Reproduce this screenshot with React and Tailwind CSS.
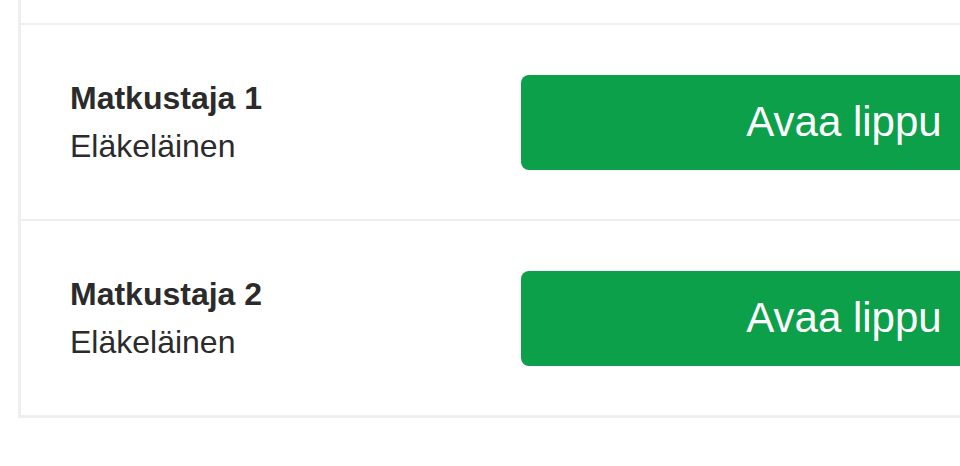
import React from 'react';

const travellers = [
  { name: 'Matkustaja 1', type: 'Eläkeläinen' },
  { name: 'Matkustaja 2', type: 'Eläkeläinen' },
];

const TravellerRow = ({ name, type, last }) => (
  <div
    className={`flex items-center pl-[49px] border-[#efefef] ${
      last ? 'h-[197px] border-b-[3px]' : 'h-[196px] border-b-2'
    }`}
  >
    <div className="w-[451px] shrink-0 text-[32px] leading-[48px] text-[#2b2b2b]">
      <div className="font-bold">{name}</div>
      <div>{type}</div>
    </div>
    <button
      type="button"
      className="w-[646px] h-[95px] shrink-0 rounded-lg bg-[#0ca04a] text-white text-[42px] leading-none flex items-center justify-center"
    >
      Avaa lippu
    </button>
  </div>
);

const App = () => {
  return (
    <div className="w-[960px] h-[466px] overflow-hidden bg-white font-['Liberation_Sans',Arial,sans-serif]">
      <div className="ml-[18px] border-l-[3px] border-[#efefef]">
        <div className="h-[25px] border-b-2 border-[#efefef]" />
        {travellers.map((t, i) => (
          <TravellerRow
            key={t.name}
            name={t.name}
            type={t.type}
            last={i === travellers.length - 1}
          />
        ))}
      </div>
    </div>
  );
};

export default App;
